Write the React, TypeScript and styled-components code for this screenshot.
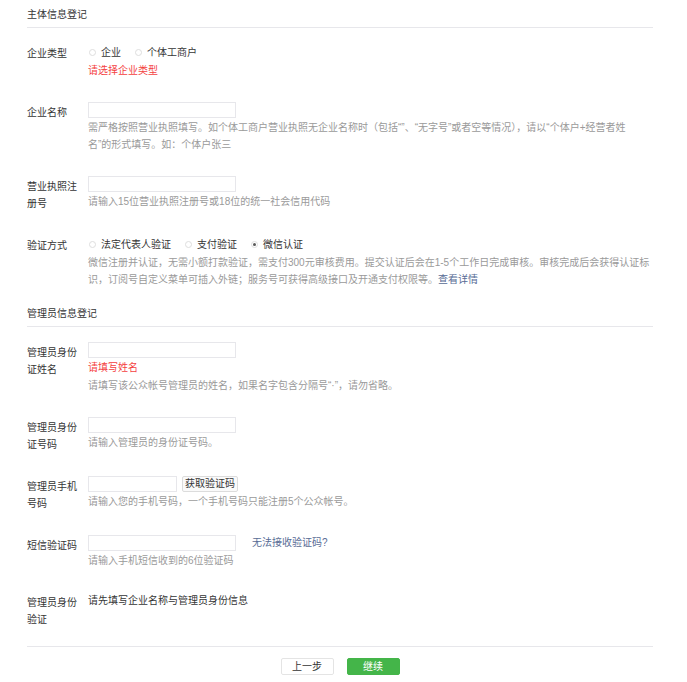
import React from 'react'
import styled, { createGlobalStyle } from 'styled-components'

const GlobalStyle = createGlobalStyle`
    * {
        box-sizing: border-box;
    }

    body {
        margin: 0;
        background: #fff;
        font-family: "Liberation Sans", "Noto Sans CJK SC", sans-serif;
        font-size: 10px;
        color: #353535;
    }
`

type RadioOption = {
    text: string
    checked?: boolean
}

type RadioRowProps = {
    options: RadioOption[]
}

const RadioLine = ({ options }: RadioRowProps) => (
    <RadioGroup>
        {options.map((option) => (
            <RadioItem key={option.text}>
                <RadioDot $checked={option.checked} />
                {option.text}
            </RadioItem>
        ))}
    </RadioGroup>
)

export default function App() {
    return (
        <Page>
            <GlobalStyle />

            <Section>
                <SectionTitle>主体信息登记</SectionTitle>
                <SectionBody>
                    <Row>
                        <Label>企业类型</Label>
                        <Content>
                            <RadioLine options={[{ text: '企业' }, { text: '个体工商户' }]} />
                            <ErrorText>请选择企业类型</ErrorText>
                        </Content>
                    </Row>

                    <Row>
                        <Label>企业名称</Label>
                        <Content>
                            <TextInput $width={148} />
                            <Hint $maxWidth={550}>
                                需严格按照营业执照填写。如个体工商户营业执照无企业名称时（包括“”、“无字号”或者空等情况），请以“个体户+经营者姓名”的形式填写。如：个体户张三
                            </Hint>
                        </Content>
                    </Row>

                    <Row>
                        <Label>营业执照注册号</Label>
                        <Content>
                            <TextInput $width={148} />
                            <Hint>请输入15位营业执照注册号或18位的统一社会信用代码</Hint>
                        </Content>
                    </Row>

                    <Row>
                        <Label>验证方式</Label>
                        <Content>
                            <RadioLine
                                options={[
                                    { text: '法定代表人验证' },
                                    { text: '支付验证' },
                                    { text: '微信认证', checked: true },
                                ]}
                            />
                            <Hint>
                                <span>
                                    微信注册并认证，无需小额打款验证，需支付300元审核费用。提交认证后会在1-5个工作日完成审核。审核完成后会获得认证标识，订阅号自定义菜单可插入外链；服务号可获得高级接口及开通支付权限等。
                                </span>
                                <Link>查看详情</Link>
                            </Hint>
                        </Content>
                    </Row>
                </SectionBody>
            </Section>

            <Section>
                <SectionTitle>管理员信息登记</SectionTitle>
                <SectionBody>
                    <Row>
                        <Label>管理员身份证姓名</Label>
                        <Content>
                            <TextInput $width={148} />
                            <ErrorText>请填写姓名</ErrorText>
                            <Hint>请填写该公众帐号管理员的姓名，如果名字包含分隔号“·”，请勿省略。</Hint>
                        </Content>
                    </Row>

                    <Row>
                        <Label>管理员身份证号码</Label>
                        <Content>
                            <TextInput $width={148} />
                            <Hint>请输入管理员的身份证号码。</Hint>
                        </Content>
                    </Row>

                    <Row>
                        <Label>管理员手机号码</Label>
                        <Content>
                            <InputLine>
                                <TextInput $width={89} />
                                <CodeButton>获取验证码</CodeButton>
                            </InputLine>
                            <Hint>请输入您的手机号码，一个手机号码只能注册5个公众帐号。</Hint>
                        </Content>
                    </Row>

                    <Row>
                        <Label>短信验证码</Label>
                        <Content>
                            <InputLine>
                                <TextInput $width={148} />
                                <SideLink>无法接收验证码?</SideLink>
                            </InputLine>
                            <Hint>请输入手机短信收到的6位验证码</Hint>
                        </Content>
                    </Row>

                    <Row>
                        <Label>管理员身份验证</Label>
                        <Content>
                            <PlainText>请先填写企业名称与管理员身份信息</PlainText>
                        </Content>
                    </Row>
                </SectionBody>
            </Section>

            <Footer>
                <Button>上一步</Button>
                <Button $primary>继续</Button>
            </Footer>
        </Page>
    )
}

const Page = styled.div`
    width: 626px;
    margin-left: 27px;
    padding-top: 6px;
`

const Section = styled.section`
    & + & {
        margin-top: 11px;
    }
`

const SectionTitle = styled.div`
    padding: 6px 0 4px;
    line-height: 17px;
    border-bottom: 1px solid #e7e7eb;

    ${Section}:first-child & {
        padding-top: 0;
    }
`

const SectionBody = styled.div`
    display: flex;
    flex-direction: column;
    gap: 23px;
    padding-top: 15px;
`

const Row = styled.div`
    display: flex;
    align-items: flex-start;
`

const Label = styled.div`
    width: 61px;
    flex-shrink: 0;
    padding: 2px 6px 0 0;
    line-height: 17px;
    color: #353535;
`

const Content = styled.div`
    flex: 1;
    min-width: 0;
`

const TextInput = styled.div<{ $width: number }>`
    width: ${(p) => p.$width}px;
    height: 16px;
    border: 1px solid #e7e7eb;
    background: #fff;
`

const InputLine = styled.div`
    display: flex;
    align-items: center;
`

const CodeButton = styled.div`
    margin-left: 5px;
    width: 56px;
    height: 16px;
    border: 1px solid #dcdcdc;
    border-radius: 2px;
    background: #fafafa;
    line-height: 14px;
    text-align: center;
    color: #353535;
`

const SideLink = styled.span`
    margin-left: 16px;
    line-height: 16px;
    color: #576b95;
`

const Hint = styled.div<{ $maxWidth?: number }>`
    max-width: ${(p) => p.$maxWidth ?? 563}px;
    margin-top: 1px;
    line-height: 17px;
    color: #9a9a9a;
`

const ErrorText = styled.div`
    margin-top: 1px;
    line-height: 17px;
    color: #f43f3f;
`

const Link = styled.span`
    color: #576b95;
`

const PlainText = styled.div`
    line-height: 17px;
    color: #353535;
`

const RadioGroup = styled.div`
    display: flex;
    align-items: center;
    gap: 14px;
    margin-top: 1px;
    height: 17px;
    padding-left: 1px;
`

const RadioItem = styled.label`
    display: flex;
    align-items: center;
    gap: 5px;
    line-height: 17px;
    color: #353535;
`

const RadioDot = styled.span<{ $checked?: boolean }>`
    position: relative;
    width: 7px;
    height: 7px;
    border-radius: 50%;
    border: 1px solid #dedede;
    background: #fff;

    &::after {
        content: '';
        position: absolute;
        inset: 1px;
        border-radius: 50%;
        background: ${(p) => (p.$checked ? '#5a5a5a' : 'transparent')};
    }
`

const Footer = styled.div`
    display: flex;
    justify-content: center;
    gap: 13px;
    margin-top: 18px;
    padding-top: 11px;
    border-top: 1px solid #e7e7eb;
`

const Button = styled.div<{ $primary?: boolean }>`
    width: 53px;
    height: 17px;
    border: 1px solid ${(p) => (p.$primary ? '#44b549' : '#e4e4e4')};
    border-radius: 2px;
    background: ${(p) => (p.$primary ? '#44b549' : '#fff')};
    color: ${(p) => (p.$primary ? '#fff' : '#353535')};
    line-height: 15px;
    text-align: center;
`
